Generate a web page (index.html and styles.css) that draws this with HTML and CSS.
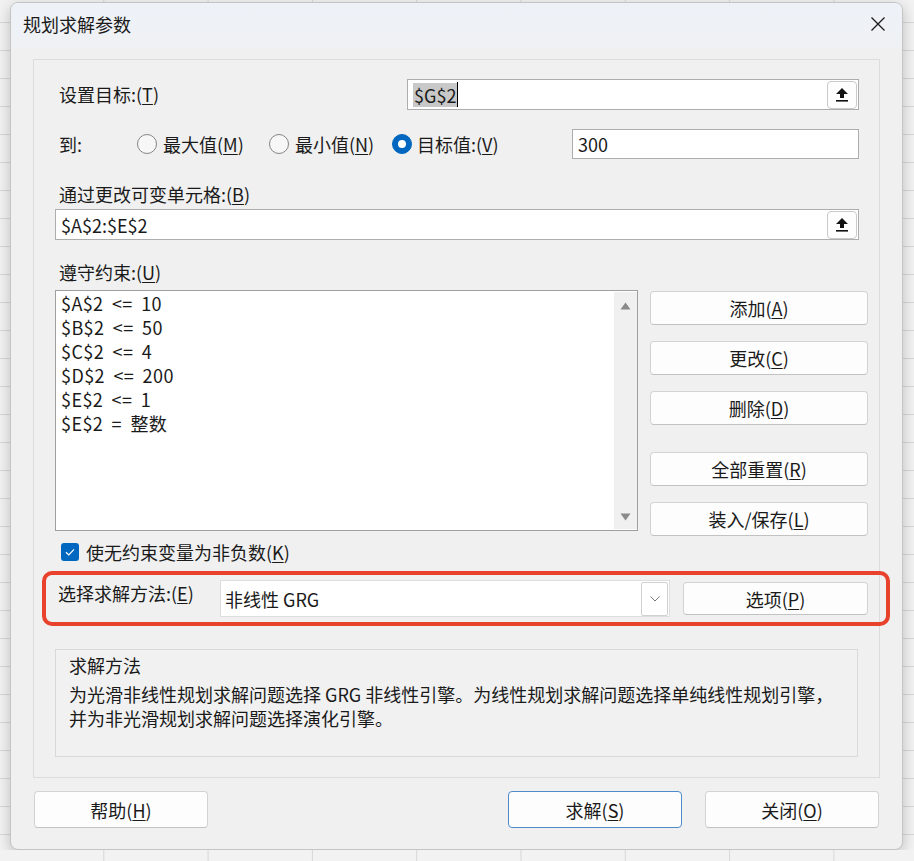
FILE: index.html
```html
<!DOCTYPE html>
<html lang="zh-CN">
<head>
    <meta charset="UTF-8">
    <meta name="viewport" content="width=device-width, initial-scale=1.0">
    <title>规划求解参数</title>
    <link rel="stylesheet" href="styles.css">
</head>
<body>
    <div class="dialog">
        <div class="titlebar">
            <span class="title">规划求解参数</span>
            <span class="close">
                <svg width="16" height="16" viewBox="0 0 16 16"><path d="M1.5 1.5 L14.5 14.5 M14.5 1.5 L1.5 14.5" stroke="#1b1b1b" stroke-width="1.3" fill="none"/></svg>
            </span>
        </div>

        <div class="frame">
            <div class="row row-target">
                <span class="lbl">设置目标:(<u>T</u>)</span>
                <div class="field field-target">
                    <span class="sel">$G$2</span><span class="caret"></span>
                    <span class="pick">
                        <svg width="12" height="14" viewBox="0 0 12 14"><path d="M6 0 L12 6 L8 6 L8 10 L4 10 L4 6 L0 6 Z" fill="#111"/><rect x="0" y="12" width="12" height="1.6" fill="#111"/></svg>
                    </span>
                </div>
            </div>

            <div class="row row-to">
                <span class="lbl lbl-to">到:</span>
                <span class="radio r-max"><i class="dot"></i>最大值(<u>M</u>)</span>
                <span class="radio r-min"><i class="dot"></i>最小值(<u>N</u>)</span>
                <span class="radio"><i class="dot on"></i>目标值:(<u>V</u>)</span>
                <div class="field field-value">300</div>
            </div>

            <div class="caption">通过更改可变单元格:(<u>B</u>)</div>
            <div class="field field-cells">
                $A$2:$E$2
                <span class="pick">
                    <svg width="12" height="14" viewBox="0 0 12 14"><path d="M6 0 L12 6 L8 6 L8 10 L4 10 L4 6 L0 6 Z" fill="#111"/><rect x="0" y="12" width="12" height="1.6" fill="#111"/></svg>
                </span>
            </div>

            <div class="caption caption-cons">遵守约束:(<u>U</u>)</div>
            <div class="constraints">
                <div class="cons-left">
                    <div class="listbox">
                        <ul class="items">
                            <li>$A$2 &lt;= 10</li>
                            <li>$B$2 &lt;= 50</li>
                            <li>$C$2 &lt;= 4</li>
                            <li>$D$2 &lt;= 200</li>
                            <li>$E$2 &lt;= 1</li>
                            <li>$E$2 = 整数</li>
                        </ul>
                        <div class="vscroll">
                            <svg width="11" height="8" viewBox="0 0 11 8"><path d="M5.5 0.5 L10.5 7.5 L0.5 7.5 Z" fill="#8a8a8a"/></svg>
                            <svg width="11" height="8" viewBox="0 0 11 8"><path d="M0.5 0.5 L10.5 0.5 L5.5 7.5 Z" fill="#8a8a8a"/></svg>
                        </div>
                    </div>
                    <div class="check">
                        <span class="box">
                            <svg width="18" height="18" viewBox="0 0 18 18"><path d="M5 9.3 L7.8 12 L13 6.3" stroke="#fff" stroke-width="1.2" fill="none"/></svg>
                        </span>
                        使无约束变量为非负数(<u>K</u>)
                    </div>
                </div>
                <div class="cons-btns">
                    <button class="btn" type="button">添加(<u>A</u>)</button>
                    <button class="btn" type="button">更改(<u>C</u>)</button>
                    <button class="btn" type="button">删除(<u>D</u>)</button>
                    <button class="btn btn-gap" type="button">全部重置(<u>R</u>)</button>
                    <button class="btn" type="button">装入/保存(<u>L</u>)</button>
                </div>
            </div>

            <div class="row row-method">
                <span class="lbl lbl-method">选择求解方法:(<u>E</u>)</span>
                <div class="combo">
                    <span class="combo-val">非线性 GRG</span>
                    <span class="combo-arrow">
                        <svg width="10" height="6" viewBox="0 0 10 6"><path d="M0.5 0.5 L5 5 L9.5 0.5" stroke="#777" stroke-width="1" fill="none"/></svg>
                    </span>
                </div>
                <button class="btn btn-opt" type="button">选项(<u>P</u>)</button>
                <span class="mark"></span>
            </div>

            <div class="desc">
                <div class="desc-title">求解方法</div>
                <p class="desc-text">为光滑非线性规划求解问题选择 GRG 非线性引擎。为线性规划求解问题选择单纯线性规划引擎，<br>并为非光滑规划求解问题选择演化引擎。</p>
            </div>
        </div>

        <div class="footer">
            <button class="btn btn-foot" type="button">帮助(<u>H</u>)</button>
            <button class="btn btn-foot btn-default" type="button">求解(<u>S</u>)</button>
            <button class="btn btn-foot btn-close" type="button">关闭(<u>O</u>)</button>
        </div>
    </div>
</body>
</html>
```

FILE: styles.css
```css
html {
    height: 100%;
    background-color: #f2f2f2;
    background-image:
        linear-gradient(to right, #d7d7d7 1px, transparent 1px),
        linear-gradient(to bottom, #d7d7d7 1px, transparent 1px);
    background-size: 104.3px 28px;
    background-position: -1px 22px;
}
body {
    margin: 0;
    font-family: "Noto Sans CJK SC", "Noto Sans", sans-serif;
    font-size: 18px;
    line-height: 24px;
    color: #1a1a1a;
}
u {
    text-underline-offset: 2px;
    text-decoration-thickness: 1px;
}
.dialog {
    box-sizing: border-box;
    width: 893px;
    height: 848px;
    margin: 2px 0 0 10px;
    background: #f0f0f0;
    border: 1px solid #c4c4c4;
    border-radius: 8px;
    box-shadow: 0 4px 14px rgba(0,0,0,0.22);
    overflow: hidden;
}
.titlebar {
    box-sizing: border-box;
    height: 45px;
    padding: 0 16px 4px 12px;
    display: flex;
    align-items: center;
    justify-content: space-between;
    background: linear-gradient(#eef2f8, #eff1f4);
}
.close {
    display: flex;
}
.frame {
    box-sizing: border-box;
    margin: 11px 22px 0 22px;
    height: 719px;
    border: 1px solid #dcdcdc;
    padding: 0 11px 0 21px;
}
.row {
    display: flex;
    align-items: center;
}
.lbl {
    padding-left: 4px;
}
.field {
    box-sizing: border-box;
    display: flex;
    align-items: center;
    background: #fff;
    border: 1px solid #adadad;
    padding-left: 5px;
}
.pick {
    box-sizing: border-box;
    margin-left: auto;
    margin-right: 1px;
    align-self: flex-end;
    width: 30px;
    height: 28px;
    display: flex;
    align-items: center;
    justify-content: center;
    background: #fdfdfd;
    border: 1px solid #cacaca;
    border-radius: 4px;
}
.row-target {
    margin-top: 19px;
    height: 31px;
}
.row-target .lbl {
    margin-top: -2px;
}
.field-target {
    margin-left: auto;
    margin-right: 9px;
    width: 452px;
    height: 31px;
}
.sel {
    background: #c8c8c8;
    padding: 0 1px;
}
.caret {
    width: 1px;
    height: 25px;
    background: #000;
}
.row-to {
    margin-top: 19px;
    height: 30px;
}
.lbl-to {
    width: 78px;
}
.radio {
    display: flex;
    align-items: center;
}
.r-max {
    width: 132px;
}
.r-min {
    width: 123px;
}
.dot {
    box-sizing: border-box;
    width: 20px;
    height: 20px;
    margin-right: 6px;
    border: 1px solid #858585;
    border-radius: 50%;
    background: #f7f7f7;
    display: flex;
    align-items: center;
    justify-content: center;
}
.dot.on {
    background: #0067c0;
    border-color: #0067c0;
    margin-right: 5px;
}
.dot.on::after {
    content: "";
    width: 8px;
    height: 8px;
    border-radius: 50%;
    background: #fff;
}
.field-value {
    margin-left: auto;
    margin-right: 9px;
    width: 287px;
    height: 30px;
}
.caption {
    margin-top: 23px;
    padding-left: 4px;
}
.field-cells {
    margin-top: 3px;
    margin-right: 9px;
    height: 31px;
}
.caption-cons {
    margin-top: 20px;
}
.constraints {
    margin-top: 6px;
    display: grid;
    grid-template-columns: 583px 218px;
    column-gap: 12px;
    align-items: start;
}
.listbox {
    box-sizing: border-box;
    height: 241px;
    display: flex;
    background: #fff;
    border: 1px solid #9f9f9f;
}
.items {
    flex: 1;
    margin: 0;
    padding: 0 5px;
    list-style: none;
    word-spacing: 4px;
    letter-spacing: 0.4px;
}
.vscroll {
    width: 23px;
    margin: 1px 0;
    padding: 10px 0 8px;
    box-sizing: border-box;
    display: flex;
    flex-direction: column;
    justify-content: space-between;
    align-items: center;
    background: #f0f0f0;
}
.check {
    margin-top: 10px;
    height: 22px;
    display: flex;
    align-items: center;
    padding-left: 6px;
}
.box {
    width: 18px;
    height: 18px;
    margin-right: 7px;
    border-radius: 3px;
    background: #0067c0;
    display: flex;
}
.cons-btns {
    padding-top: 1px;
    display: flex;
    flex-direction: column;
    gap: 16px;
}
.btn {
    box-sizing: border-box;
    height: 34px;
    padding: 0;
    font: inherit;
    color: #1a1a1a;
    background: #fdfdfd;
    border: 1px solid #d3d3d3;
    border-bottom-color: #c2c2c2;
    border-radius: 4px;
    cursor: pointer;
}
.btn-gap {
    margin-top: 11px;
}
.row-method {
    position: relative;
    margin-top: 17px;
    height: 37px;
}
.lbl-method {
    align-self: flex-start;
    width: 162px;
    padding-left: 3px;
    margin-top: 1px;
}
.combo {
    box-sizing: border-box;
    width: 450px;
    height: 37px;
    display: flex;
    align-items: center;
    background: #fff;
    border: 1px solid #dedede;
    padding-left: 4px;
}
.combo-arrow {
    box-sizing: border-box;
    margin-left: auto;
    margin-right: 1px;
    width: 27px;
    height: 34px;
    display: flex;
    align-items: center;
    justify-content: center;
    border: 1px solid #d0d0d0;
    border-radius: 2px;
}
.btn-opt {
    margin-left: 13px;
    width: 185px;
    height: 33px;
}
/* red outline around the solver method row */
.mark {
    position: absolute;
    top: -9px;
    bottom: -9px;
    left: -13px;
    right: -22px;
    border: 4px solid #e8412c;
    border-radius: 10px;
    pointer-events: none;
}
.desc {
    box-sizing: border-box;
    margin-top: 32px;
    margin-right: 10px;
    height: 108px;
    border: 1px solid #d9d9d9;
    background: #f1f1f1;
    padding: 3px 12px 0 13px;
}
.desc-text {
    margin: 5px 0 0;
}
.footer {
    margin-top: 13px;
    padding: 0 23px;
    display: flex;
}
.btn-foot {
    width: 174px;
    height: 37px;
}
.btn-default {
    margin-left: auto;
    border: 1px solid #4d8bca;
}
.btn-close {
    margin-left: 23px;
}
```
